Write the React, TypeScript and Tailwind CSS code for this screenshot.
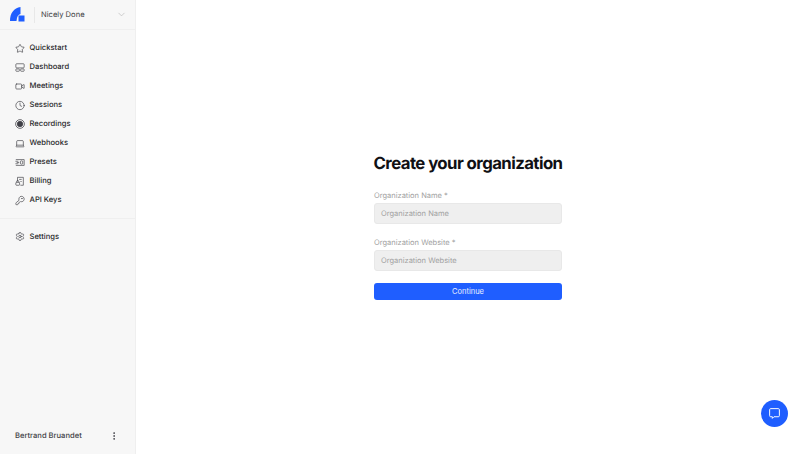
import React from "react";
import { Star, Video, Clock, Laptop, KeyRound, Settings, MoreVertical, ChevronDown } from "lucide-react";

const Dash = () => (
  <svg width="11" height="11" viewBox="0 0 24 24" fill="none" stroke="currentColor" strokeWidth="1.6">
    <rect x="2" y="3" width="20" height="10" rx="2" />
    <rect x="2" y="15.5" width="8.5" height="5.5" rx="1.5" />
    <rect x="13.5" y="15.5" width="8.5" height="5.5" rx="1.5" />
  </svg>
);
const Rec = () => (
  <svg width="10" height="10" viewBox="0 0 24 24" fill="none" stroke="currentColor" strokeWidth="1.8">
    <circle cx="12" cy="12" r="10.5" />
    <circle cx="12" cy="12" r="6.5" fill="currentColor" />
  </svg>
);
const Presets = () => (
  <svg width="11" height="11" viewBox="0 0 24 24" fill="none" stroke="currentColor" strokeWidth="1.6">
    <path d="M2 5h20v14H2" />
    <path d="M1 9h7M1 15h7M4 12h6" />
    <rect x="13" y="8" width="5.5" height="8" rx="2" />
  </svg>
);
const Billing = () => (
  <svg width="11" height="11" viewBox="0 0 24 24" fill="none" stroke="currentColor" strokeWidth="1.6">
    <path d="M6 12V2h14v19h-7" />
    <path d="M10 7h6M13 12h3" />
    <rect x="2" y="14" width="9" height="7" rx="1.5" />
    <path d="M4 14v-2a2.5 2.5 0 0 1 5 0v2" />
  </svg>
);

const Item = ({ icon, label }: { icon: React.ReactNode; label: string }) => (
  <div className="flex h-[19px] items-center gap-[4.5px] pl-[15px] text-[#3f3f46]">
    <span className="flex w-[10px] justify-center">{icon}</span>
    <span className="text-[7.6px] font-medium text-[#27272a]">{label}</span>
  </div>
);

export default function App() {
  const s = { size: 11, strokeWidth: 1.6 };
  return (
    <div className="flex h-[454px] w-[800px] overflow-hidden bg-white font-['Inter',sans-serif] [text-rendering:geometricPrecision]">
      <aside className="flex w-[136px] shrink-0 flex-col border-r border-[#efefef] bg-[#f7f7f7]">
        <div className="flex h-[30px] shrink-0 items-center border-b border-[#efefef] pl-[10px] pr-[8px]">
          <svg width="15" height="15" viewBox="0 0 15 15" className="shrink-0">
            <path d="M0 14 C0 6 4 1 10.5 0 V7 Q7 7.5 6.5 14 Z" fill="#1f5eff" />
            <rect x="8.5" y="8.5" width="6" height="6" fill="#1f5eff" />
          </svg>
          <div className="ml-[9px] mr-[6px] h-[16px] w-px bg-[#e8e8e8]" />
          <span className="text-[7.6px] text-[#3f3f46]">Nicely Done</span>
          <ChevronDown size={11} strokeWidth={1.4} className="ml-auto text-[#b5b5b5]" />
        </div>
        <nav className="flex flex-col pt-[8.5px]">
          <Item icon={<Star {...s} />} label="Quickstart" />
          <Item icon={<Dash />} label="Dashboard" />
          <Item icon={<Video {...s} />} label="Meetings" />
          <Item icon={<Clock {...s} />} label="Sessions" />
          <Item icon={<Rec />} label="Recordings" />
          <Item icon={<Laptop {...s} />} label="Webhooks" />
          <Item icon={<Presets />} label="Presets" />
          <Item icon={<Billing />} label="Billing" />
          <Item icon={<KeyRound {...s} />} label="API Keys" />
        </nav>
        <div className="mt-[8.5px] border-t border-[#efefef] pt-[8px]">
          <Item icon={<Settings {...s} />} label="Settings" />
        </div>
        <div className="mt-auto flex h-[36px] items-center justify-between pl-[15px] pr-[16px]">
          <span className="text-[7.6px] font-medium text-[#3f3f46]">Bertrand Bruandet</span>
          <MoreVertical size={10} className="text-[#3f3f46]" />
        </div>
      </aside>
      <main className="relative flex flex-1 justify-center pt-[153px]">
        <div className="flex w-[188px] flex-col">
          <h1 className="-mx-[2px] whitespace-nowrap text-center text-[16.8px] font-bold leading-[22px] tracking-[-0.58px] text-[#101014]">Create your organization</h1>
          <label className="mt-[15px] text-[7.5px] leading-[11px] text-[#a1a1a1]">Organization Name *</label>
          <div className="mt-[2px] flex h-[21px] items-center rounded-[3px] border border-[#e8e8e8] bg-[#efefef] pl-[6px] text-[7.5px] text-[#a1a1a1]">Organization Name</div>
          <label className="mt-[13px] text-[7.5px] leading-[11px] text-[#a1a1a1]">Organization Website *</label>
          <div className="mt-[2px] flex h-[21px] items-center rounded-[3px] border border-[#e8e8e8] bg-[#efefef] pl-[6px] text-[7.5px] text-[#a1a1a1]">Organization Website</div>
          <button className="mt-[12px] flex h-[17px] items-center justify-center rounded-[3px] bg-[#1f5eff] text-[7.5px] text-white/90">Continue</button>
        </div>
        <div className="absolute bottom-[27px] right-[12px] flex h-[27px] w-[27px] items-center justify-center rounded-full bg-[#1f5eff]">
          <svg width="13" height="13" viewBox="0 0 24 24" fill="none" stroke="white" strokeWidth="1.8">
            <path d="M5 3h14a2 2 0 0 1 2 2v11a2 2 0 0 1-2 2h-8l-3 3v-3H5a2 2 0 0 1-2-2V5a2 2 0 0 1 2-2z" />
          </svg>
        </div>
      </main>
    </div>
  );
}
